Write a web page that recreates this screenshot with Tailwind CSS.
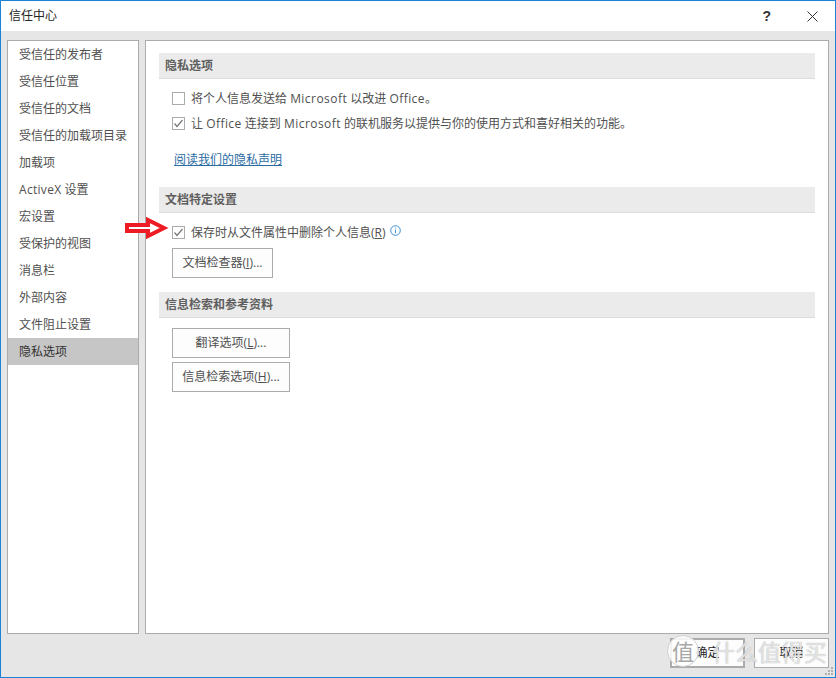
<!DOCTYPE html>
<html lang="zh-CN">
<head>
<meta charset="UTF-8">
<title>信任中心</title>
<script src="https://cdn.jsdelivr.net/npm/@tailwindcss/browser@4"></script>
</head>
<body class="m-0">
<div class="relative w-[836px] h-[678px] overflow-hidden flex flex-col border border-[#1883d7] bg-[#e6e6e6] text-[12px] leading-[18px] text-[#505050] font-['Open_Sans','Noto_Sans_CJK_SC',sans-serif]">
  <!-- title bar -->
  <header class="h-[30px] bg-white flex items-center shrink-0">
    <h1 class="ml-2 text-[12px] font-normal text-[#262626]">信任中心</h1>
    <span class="ml-auto mr-[36px] text-[14px] font-bold text-[#333] font-['Liberation_Sans',sans-serif]">?</span>
    <svg class="mr-[17px]" width="11" height="11" viewBox="0 0 11 11" fill="none" stroke="#333" stroke-width="1"><path d="M0.5 0.5 10.5 10.5M10.5 0.5 0.5 10.5"/></svg>
  </header>

  <div class="flex gap-[6px] pl-[6px] pr-[6px] pt-[9px]">
    <!-- left nav -->
    <nav class="w-[132px] h-[594px] bg-white border border-[#ababab] shrink-0">
      <div class="h-[27px] pl-[11px] flex items-center">受信任的发布者</div>
      <div class="h-[27px] pl-[11px] flex items-center">受信任位置</div>
      <div class="h-[27px] pl-[11px] flex items-center">受信任的文档</div>
      <div class="h-[27px] pl-[11px] flex items-center">受信任的加载项目录</div>
      <div class="h-[27px] pl-[11px] flex items-center">加载项</div>
      <div class="h-[27px] pl-[11px] flex items-center"><span class="tracking-[0.3px]">ActiveX</span>&nbsp;设置</div>
      <div class="h-[27px] pl-[11px] flex items-center">宏设置</div>
      <div class="h-[27px] pl-[11px] flex items-center">受保护的视图</div>
      <div class="h-[27px] pl-[11px] flex items-center">消息栏</div>
      <div class="h-[27px] pl-[11px] flex items-center">外部内容</div>
      <div class="h-[27px] pl-[11px] flex items-center">文件阻止设置</div>
      <div class="h-[27px] pl-[11px] flex items-center bg-[#c6c6c6] text-[#333]">隐私选项</div>
    </nav>

    <!-- right panel -->
    <main class="w-[684px] h-[594px] bg-white border border-[#ababab] pl-[13px] pt-[12px] shrink-0">
      <section class="h-[26px] w-[656px] bg-[#ebebeb] border-b border-[#dcdcdc] flex items-center pl-[6px] font-bold text-[#5f5f5f]">隐私选项</section>

      <div class="flex items-center h-[18px] mt-[10px] ml-[13px]">
        <span class="w-[13px] h-[13px] border border-[#ababab] bg-white"></span>
        <span class="ml-[6px] pt-[2px]">将个人信息发送给 <span class="tracking-[0.45px]">Microsoft</span> 以改进 <span class="tracking-[0.45px]">Office</span>。</span>
      </div>
      <div class="flex items-center h-[18px] mt-[7px] ml-[13px]">
        <span class="w-[13px] h-[13px] border border-[#ababab] bg-white flex items-center justify-center">
          <svg width="11" height="11" viewBox="0 0 11 11" fill="none" stroke="#777" stroke-width="1.2"><path d="M1.5 5.5 4 8.5 9.5 2"/></svg>
        </span>
        <span class="ml-[6px] pt-[2px]">让 <span class="tracking-[0.45px]">Office</span> 连接到 <span class="tracking-[0.45px]">Microsoft</span> 的联机服务以提供与你的使用方式和喜好相关的功能。</span>
      </div>
      <a class="block ml-[15px] mt-[19px] mb-[18px] h-[18px] text-[#2b6ca3] underline">阅读我们的隐私声明</a>

      <section class="h-[26px] w-[656px] bg-[#ebebeb] border-b border-[#dcdcdc] flex items-center pl-[6px] font-bold text-[#5f5f5f]">文档特定设置</section>

      <div class="flex items-center h-[18px] mt-[10px] ml-[13px]">
        <span class="w-[13px] h-[13px] border border-[#ababab] bg-white flex items-center justify-center">
          <svg width="11" height="11" viewBox="0 0 11 11" fill="none" stroke="#777" stroke-width="1.2"><path d="M1.5 5.5 4 8.5 9.5 2"/></svg>
        </span>
        <span class="ml-[6px] pt-[1px]">保存时从文件属性中删除个人信息(<span class="underline">R</span>)</span>
        <svg class="ml-[4px] mb-[3px]" width="11" height="11" viewBox="0 0 11 11" fill="none"><circle cx="5.5" cy="5.5" r="4.8" stroke="#3f8fd2"/><path d="M5.5 4.7V8.3M5.5 2.6V3.6" stroke="#3f8fd2"/></svg>
      </div>
      <button class="block ml-[13px] mt-[7px] w-[101px] h-[30px] border border-[#ababab] bg-[#fdfdfd]">文档检查器(<span class="underline">I</span>)...</button>

      <section class="h-[26px] w-[656px] mt-[14px] bg-[#ebebeb] border-b border-[#dcdcdc] flex items-center pl-[6px] font-bold text-[#5f5f5f]">信息检索和参考资料</section>

      <button class="block ml-[13px] mt-[10px] w-[118px] h-[30px] border border-[#ababab] bg-[#fdfdfd]">翻译选项(<span class="underline">L</span>)...</button>
      <button class="block ml-[13px] mt-[4px] w-[118px] h-[30px] border border-[#ababab] bg-[#fdfdfd]">信息检索选项(<span class="underline">H</span>)...</button>
    </main>
  </div>

  <!-- bottom buttons -->
  <footer class="flex justify-end gap-[9px] pr-[6px] pt-[4px]">
    <button class="w-[75px] h-[30px] border-2 border-[#ababab] bg-[#fdfdfd] text-[#262626]">确定</button>
    <button class="w-[75px] h-[30px] border border-[#ababab] bg-[#fdfdfd] text-[#262626]">取消</button>
  </footer>

  <!-- red arrow annotation -->
  <svg class="absolute left-[123px] top-[214px]" width="46" height="27" viewBox="0 0 46 27" fill="white" stroke="#ed1c24" stroke-width="4"><path d="M3 10H24V5L40 13 24 21V16H3Z"/></svg>

  <!-- site watermark -->
  <div class="absolute left-[666px] top-[634px] w-[32px] h-[32px] rounded-full bg-white/85 border border-[#d0d0d0] flex items-center justify-center text-[22px] text-[#a8a8a8] leading-none">值</div>
  <div class="absolute left-[711px] top-[636px] text-[23px] leading-[30px] text-white/70 whitespace-nowrap [text-shadow:0_0_1px_#999]">什么值得买</div>

  <!-- resize grip -->
  <svg class="absolute right-[1px] bottom-[1px]" width="10" height="10" viewBox="0 0 10 10" fill="#b0b0b0"><rect x="7" y="1" width="2" height="2"/><rect x="4" y="4" width="2" height="2"/><rect x="7" y="4" width="2" height="2"/><rect x="1" y="7" width="2" height="2"/><rect x="4" y="7" width="2" height="2"/><rect x="7" y="7" width="2" height="2"/></svg>
</div>
</body>
</html>
